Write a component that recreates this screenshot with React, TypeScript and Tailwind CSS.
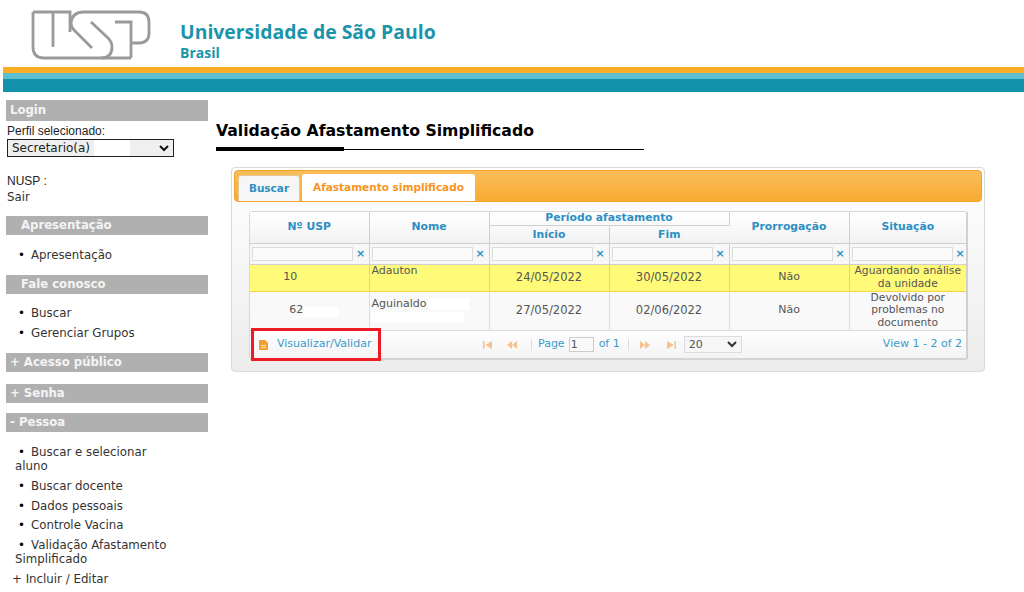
const verdana = "font-['DejaVu_Sans',Verdana,sans-serif]";

function UspLogo() {
  return (
    <svg width="124" height="52" viewBox="31 8 124 52" className="block" fill="none" stroke="#9a9a9a" strokeWidth="2.8">
      <path d="M33 12H70V32" />
      <path d="M33 12V47Q33 58 44 58H131" />
      <path d="M53 12V47" />
      <path d="M92 48L74 30Q71 27 71 23Q72 12 84 12H139Q149 12 149 22V33Q149 43 139 43H131" />
      <path d="M91 22L108 38Q112 42 112 47Q112 58 101 58" />
      <path d="M115 22H131V58" />
    </svg>
  );
}

function SideHead({ label, indent }: { label: string; indent?: boolean }) {
  return (
    <div className={`h-[19px] bg-[#b0b0b0] flex items-center text-[11.7px] font-bold text-[#f4f4f4] leading-none ${indent ? "pl-[15px]" : "pl-[4px]"}`}>
      {label}
    </div>
  );
}

function SideItem({ label, wrap }: { label: string; wrap?: string }) {
  return (
    <li className="pl-[9px] leading-[14px] text-[#333]">
      <span className="inline-block w-[16px] pl-[3px] text-black">•</span>
      {label}
      {wrap && <div>{wrap}</div>}
    </li>
  );
}

function Sidebar() {
  return (
    <aside className={`w-[202px] ml-[6px] shrink-0 text-[11.8px] ${verdana}`}>
      <div className="h-[21px] bg-[#b0b0b0] flex items-center pl-[4px] text-[11.7px] font-bold text-[#f4f4f4]">Login</div>
      <div className="font-['Liberation_Sans',Arial,sans-serif] text-[12px] leading-[14px] mt-[3px] ml-px text-[#222]">Perfil selecionado:</div>
      <div className="relative w-[167px] h-[18px] ml-px mt-px border border-[#222] bg-[#efefef] flex items-center pl-[4px] text-[12px] text-[#222]">
        Secretario(a)
        <div className="absolute left-[86px] top-0 w-[36px] h-[16px] bg-white" />
        <svg className="absolute right-[4px] top-[5px]" width="10" height="7" viewBox="0 0 10 7" fill="none" stroke="#111" strokeWidth="2"><path d="M1 1l4 4 4-4" /></svg>
      </div>
      <div className="font-['Liberation_Sans',Arial,sans-serif] text-[12px] leading-[14px] mt-[17px] ml-px text-[#222]">NUSP :</div>
      <div className="leading-[14px] mt-[2px] ml-px text-[#333]">Sair</div>
      <div className="mt-[12px]"><SideHead label="Apresentação" indent /></div>
      <ul className="mt-[13px]"><SideItem label="Apresentação" /></ul>
      <div className="mt-[13px]"><SideHead label="Fale conosco" indent /></div>
      <ul className="mt-[12px] flex flex-col gap-[6px]">
        <SideItem label="Buscar" />
        <SideItem label="Gerenciar Grupos" />
      </ul>
      <div className="mt-[13px]"><SideHead label="+ Acesso público" /></div>
      <div className="mt-[12px]"><SideHead label="+ Senha" /></div>
      <div className="mt-[10px]"><SideHead label="- Pessoa" /></div>
      <ul className="mt-[13px] flex flex-col gap-[5.8px]">
        <SideItem label="Buscar e selecionar" wrap="aluno" />
        <SideItem label="Buscar docente" />
        <SideItem label="Dados pessoais" />
        <SideItem label="Controle Vacina" />
        <SideItem label="Validação Afastamento" wrap="Simplificado" />
        <li className="pl-[6px] leading-[14px] text-[#333]">+ Incluir / Editar</li>
      </ul>
    </aside>
  );
}

function Filter() {
  return (
    <div className="flex items-center h-full pl-[2px] pr-[2px] gap-[3px]">
      <div className="w-[101px] h-[14px] border border-[#dcdcdc] bg-[#fafafa] shrink-0" />
      <span className="text-[11px] font-bold leading-none text-[#2e8fc4]">×</span>
    </div>
  );
}

const th = "border-r border-[#cfcfcf] text-center font-bold text-[#2e8fc4] p-0 last:border-r-0";
const td = "border-r p-0 text-center align-middle last:border-r-0";
const date = "text-[11.5px]";

function PageIcon({ d, className }: { d: string; className: string }) {
  return (
    <svg className={className} width="12" height="8" viewBox="0 0 12 8" fill="#f6c48b"><path d={d} /></svg>
  );
}

function Grid() {
  return (
    <div className="relative w-[719px] border-t border-l border-[#d8d8d8] border-r-2 border-r-[#d0d0d0] border-b-2 border-b-[#d4d4d4] rounded-[3px] bg-[#f9f9f9]">
      <table className="w-[716px] table-fixed border-collapse text-[10.8px]">
        <colgroup>
          <col className="w-[119px]" />
          <col className="w-[120px]" />
          <col className="w-[120px]" />
          <col className="w-[120px]" />
          <col className="w-[120px]" />
          <col className="w-[117px]" />
        </colgroup>
        <thead className="bg-gradient-to-b from-white to-[#f2f2f2]">
          <tr className="h-[13px] leading-none">
            <th rowSpan={2} className={th}>Nº USP</th>
            <th rowSpan={2} className={th}>Nome</th>
            <th colSpan={2} className={`${th} border-b pt-px`}>Período afastamento</th>
            <th rowSpan={2} className={th}>Prorrogação</th>
            <th rowSpan={2} className={th}>Situação</th>
          </tr>
          <tr className="h-[18px] leading-none">
            <th className={`${th} pt-[2px]`}>Início</th>
            <th className={`${th} pt-[2px]`}>Fim</th>
          </tr>
        </thead>
        <tbody className="text-[#555] leading-[12.7px] text-[11px]">
          <tr className="h-[21px] bg-[#f7f7f7] border-y border-[#cfcfcf]">
            {[0, 1, 2, 3, 4, 5].map((i) => (
              <td key={i} className={`${td} border-[#cfcfcf]`}><Filter /></td>
            ))}
          </tr>
          <tr className="h-[27px] bg-[#fffb78] border-y border-[#fcd04a]">
            <td className={`${td} border-[#fcd04a] pr-[38px]`}>10</td>
            <td className={`${td} border-[#fcd04a] text-left align-top pl-[2px]`}>Adauton</td>
            <td className={`${td} border-[#fcd04a] ${date}`}>24/05/2022</td>
            <td className={`${td} border-[#fcd04a] ${date}`}>30/05/2022</td>
            <td className={`${td} border-[#fcd04a]`}>Não</td>
            <td className={`${td} border-[#fcd04a] text-[10.7px]`}>Aguardando análise da unidade</td>
          </tr>
          <tr className="h-[39px] border-b border-[#dcdcdc]">
            <td className={`${td} border-[#dcdcdc] pr-[26px]`}>62</td>
            <td className={`${td} border-[#dcdcdc] text-left align-top pl-[2px] pt-[6px]`}>Aguinaldo</td>
            <td className={`${td} border-[#dcdcdc] ${date}`}>27/05/2022</td>
            <td className={`${td} border-[#dcdcdc] ${date}`}>02/06/2022</td>
            <td className={`${td} border-[#dcdcdc]`}>Não</td>
            <td className={`${td} border-[#dcdcdc] text-[10.7px]`}>Devolvido por problemas no documento</td>
          </tr>
        </tbody>
      </table>

      {/* Pager */}
      <div className="relative h-[27px] pt-px bg-gradient-to-b from-white to-[#f3f3f3] flex items-center text-[11px] text-[#3b9bcb]">
        <div className="w-[232px] pl-[9px] flex items-center gap-[9px] shrink-0">
          <svg width="9" height="10" viewBox="0 0 9 10"><path d="M0 0h6l3 3v7H0z" fill="#f0a030" /><path d="M2 5h5v1H2zM2 7h5v1H2z" fill="#fbe0b0" /></svg>
          <span>Visualizar/Validar</span>
        </div>
        <div className="flex items-center">
          <PageIcon className="" d="M1 0h1.500v8H1zM10 0v8L3.500 4z" />
          <PageIcon className="ml-[12px]" d="M6 0v8L1 4zM11 0v8L6 4z" />
          <div className="ml-[13px] w-px h-[12px] bg-[#ddd]" />
          <span className="ml-[6px]">Page</span>
          <div className="ml-[4px] w-[25px] h-[15px] border border-[#ccc] bg-[#f9f9f9] text-[#555] pl-[1px] leading-[13px]">1</div>
          <span className="ml-[5px]">of 1</span>
          <div className="ml-[8px] w-px h-[12px] bg-[#ddd]" />
          <PageIcon className="ml-[10px]" d="M1 0v8l5-4zM6 0v8l5-4z" />
          <PageIcon className="ml-[14px]" d="M2 0v8l7-4zM9.500 0H11v8H9.500z" />
          <div className="relative ml-[7px] w-[58px] h-[17px] border border-[#ddd] bg-[#f6f6f6] text-[#555] pl-[4px] leading-[15px]">
            20
            <svg className="absolute right-[4px] top-[4px]" width="10" height="7" viewBox="0 0 10 7" fill="none" stroke="#333" strokeWidth="2"><path d="M1 1l4 4 4-4" /></svg>
          </div>
        </div>
        <span className="ml-auto pr-[4px]">View 1 - 2 of 2</span>
      </div>

      {/* mascaras sobre dados ocultos */}
      <div className="absolute left-[53px] top-[95px] w-[35px] h-[10px] bg-white" />
      <div className="absolute left-[178px] top-[86px] w-[41px] h-[12px] bg-white" />
      <div className="absolute left-[121px] top-[100px] w-[93px] h-[10px] bg-white" />

      {/* destaque vermelho */}
      <div className="absolute left-[1px] top-[116px] w-[130px] h-[33px] border-[3px] border-[#ed1c24]" />
    </div>
  );
}

function Panel() {
  return (
    <div className="w-[754px] h-[205px] mt-[17px] ml-[15px] border border-[#d9d9d9] rounded-[4px] bg-gradient-to-b from-white to-[#ececec] p-[2px]">
      <div className="h-[32px] rounded-[4px] border border-[#f4a32c] bg-gradient-to-b from-[#fbbd58] to-[#f8ab30] flex items-end gap-[2px] pl-[3px]">
        <div className="h-[26px] w-[62px] border border-b-0 border-[#e3c89a] rounded-t-[3px] bg-[#f6f6f6] flex items-center justify-center text-[10.500px] font-bold text-[#2e8fc4]">Buscar</div>
        <div className="h-[27px] w-[173px] rounded-t-[3px] bg-white flex items-center justify-center text-[10.500px] font-bold text-[#f7941e]">Afastamento simplificado</div>
      </div>
      <div className="mt-[9px] ml-[15px]"><Grid /></div>
    </div>
  );
}

export default function App() {
  return (
    <div className={`w-[1024px] h-[592px] overflow-hidden bg-white ${verdana}`}>
      <header className="h-[67px] flex items-start">
        <div className="ml-[31px] mt-[8px]"><UspLogo /></div>
        <div className="ml-[25px] mt-[20px] font-['Open_Sans',sans-serif] font-bold text-[#1a94ab]">
          <div className="text-[19.400px] leading-[24px]">Universidade de São Paulo</div>
          <div className="text-[14px] leading-[15px] mt-px">Brasil</div>
        </div>
      </header>
      <div className="ml-[3px]">
        <div className="h-[6px] bg-[#fbad26]" />
        <div className="h-[6px] bg-[#5cbfcf]" />
        <div className="h-[13px] bg-[#1292ab]" />
      </div>
      <div className="flex mt-[8px]">
        <Sidebar />
        <main className="flex-1 min-w-0 ml-[8px]">
          <h1 className="mt-[21px] text-[15.700px] font-bold leading-[19px] text-black">Validação Afastamento Simplificado</h1>
          <div className="mt-[7px] w-[428px] h-[3px] border-b border-black relative">
            <div className="w-[128px] h-[4px] bg-black" />
          </div>
          <Panel />
        </main>
      </div>
    </div>
  );
}
